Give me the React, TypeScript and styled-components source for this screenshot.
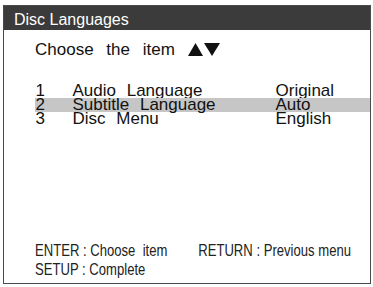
import React from "react";
import styled, { createGlobalStyle } from "styled-components";

const Global = createGlobalStyle`
  html, body { margin: 0; padding: 0; background: #fff; }
  body { width: 373px; height: 287px; overflow: hidden; font-family: "Liberation Sans", Arial, sans-serif; }
`;

const Page = styled.div`
  width: 373px;
  height: 287px;
  padding: 5px 2px 3px 3px;
  box-sizing: border-box;
  background: #fff;
`;

const Frame = styled.div`
  height: 100%;
  border: 1.5px solid #4a4a4a;
  box-sizing: border-box;
  display: flex;
  flex-direction: column;
`;

const TitleBar = styled.div`
  background: #3b3b3b;
  color: #fff;
  font-size: 16px;
  height: 23.5px;
  box-sizing: border-box;
  padding: 5px 0 0 10px;
  line-height: 18px;
`;

const Body = styled.div`
  flex: 1;
  display: flex;
  flex-direction: column;
  padding: 10px 0 4px 0;
  color: #111;
`;

const Prompt = styled.div`
  font-size: 17px;
  line-height: 20px;
  padding-left: 31px;
  word-spacing: 8px;
  display: flex;
  align-items: center;
`;

const Arrows = styled.svg`
  margin-left: 13px;
  margin-top: -1px;
`;

const List = styled.div`
  margin-top: 24px;
  margin-left: 30.5px;
  display: flex;
  flex-direction: column;
`;

const Row = styled.div<{ $active?: boolean }>`
  display: grid;
  grid-template-columns: 37px 203px 1fr;
  padding-left: 1px;
  font-size: 17px;
  line-height: 14px;
  height: 14px;
  word-spacing: 6px;
  background: ${(p) => (p.$active ? "#c6c6c6" : "transparent")};
`;

const Footer = styled.div`
  margin-top: auto;
  padding-left: 31px;
  color: #222;
`;

const FooterInner = styled.div`
  font-size: 17px;
  line-height: 19px;
  transform: scaleX(0.77);
  transform-origin: left center;
  width: 440px;
`;

const FooterLine = styled.div`
  display: grid;
  grid-template-columns: 212px auto;
  white-space: pre;
`;

const items = [
  { n: "1", label: "Audio Language", value: "Original" },
  { n: "2", label: "Subtitle Language", value: "Auto", active: true },
  { n: "3", label: "Disc Menu", value: "English" },
];

export default function App() {
  return (
    <>
      <Global />
      <Page>
        <Frame>
          <TitleBar>Disc Languages</TitleBar>
          <Body>
            <Prompt>
              Choose the item
              <Arrows width="32" height="13" viewBox="0 0 32 13">
                <polygon points="0,13 7.5,0 15,13" fill="#111" />
                <polygon points="16,0 32,0 24,13" fill="#111" />
              </Arrows>
            </Prompt>
            <List>
              {items.map((it) => (
                <Row key={it.n} $active={it.active}>
                  <span>{it.n}</span>
                  <span>{it.label}</span>
                  <span>{it.value}</span>
                </Row>
              ))}
            </List>
            <Footer>
              <FooterInner>
                <FooterLine>
                  <span>ENTER : Choose  item</span>
                  <span>RETURN : Previous menu</span>
                </FooterLine>
                <FooterLine>
                  <span>SETUP : Complete</span>
                </FooterLine>
              </FooterInner>
            </Footer>
          </Body>
        </Frame>
      </Page>
    </>
  );
}
